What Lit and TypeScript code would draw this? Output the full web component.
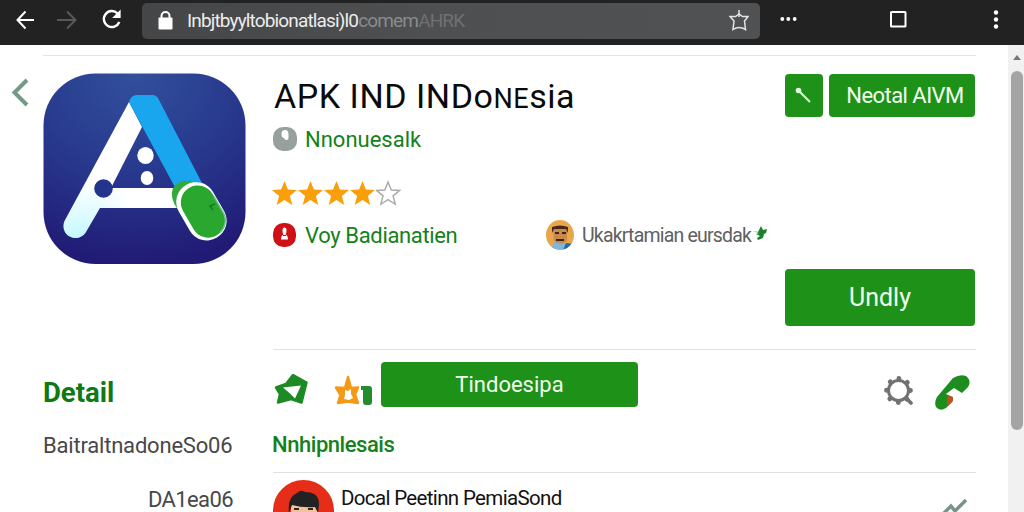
import { LitElement, html, css, svg } from 'lit';
import { customElement, property } from 'lit/decorators.js';

const STAR = 'M13 1l3.3 8.2 8.7.5-6.8 5.6 2.3 8.7-7.5-4.8L5.500 24l2.300-8.700L1 9.700l8.700-.5z';

@customElement('browser-bar')
export class BrowserBar extends LitElement {
  static styles = css`
    :host {
      display: flex;
      align-items: center;
      box-sizing: border-box;
      height: 45px;
      padding: 0 20px 5px 14px;
      background: #222223;
      color: #fff;
    }

    svg {
      display: block;
      flex: none;
    }

    .nav {
      display: flex;
      gap: 20px;
      width: 128px;
    }

    .address {
      display: flex;
      align-items: center;
      box-sizing: border-box;
      width: 618px;
      height: 36px;
      margin-top: 1px;
      padding: 0 11px 0 15px;
      border-radius: 5px;
      background: linear-gradient(90deg, #454648, #4e4f50 45%, #505152);
    }

    .url {
      flex: 1;
      margin-left: 13px;
      font-size: 19px;
      line-height: 34px;
      letter-spacing: -0.85px;
      white-space: nowrap;
    }

    .host {
      color: #ececec;
    }

    .path {
      color: #8a8b8c;
    }

    .tail {
      color: #707173;
    }

    .dots {
      margin-left: 20px;
    }

    .window {
      margin-left: 91px;
    }

    .menu {
      margin-left: auto;
    }
  `;

  render() {
    return html`
      <div class="nav">
        <svg width="22" height="22" viewBox="0 0 22 22" fill="none" stroke="#fff" stroke-width="2">
          <path d="M20 11H4M11.500 2.500L3.500 11l8 8.500" />
        </svg>
        <svg width="22" height="22" viewBox="0 0 22 22" fill="none" stroke="#58595a" stroke-width="2">
          <path d="M1 11h18M11 2.500l8.500 8.500-8.500 8.500" />
        </svg>
        <svg width="24" height="22" viewBox="-1 1 24 22" fill="none" stroke="#fff" stroke-width="2.400">
          <path d="M20.300 14A8 8 0 1 1 18.500 5.300" />
          <path d="M21.600 1.500v8.500h-8.500z" fill="#fff" stroke="none" />
        </svg>
      </div>
      <div class="address">
        <svg width="17" height="20" viewBox="0 1 17 20">
          <rect x="1.500" y="7.500" width="14" height="12" rx="1" fill="#fff" />
          <path d="M4.500 8V6a4 4 0 0 1 8 0V8" fill="none" stroke="#fff" stroke-width="2" />
        </svg>
        <div class="url"><span class="host">Inbjtbyyltobionatlasi)l0</span><span class="path">comem</span><span class="tail">AHRK</span></div>
        <svg width="20" height="22" viewBox="0 1 20 22" fill="none" stroke="#e4e4e4" stroke-width="1.500">
          <path d="M1 7.500h5.500L10 5l3.500 2.500H19l-3.500 4.500 1 8.500Q10 16.500 4 20.500L5 12z" />
          <path d="M10 1v7" />
        </svg>
      </div>
      <svg class="dots" width="18" height="6" viewBox="0 1 18 6" fill="#fff">
        <circle cx="2.300" cy="3" r="1.900" /><circle cx="8.300" cy="3" r="1.900" /><circle cx="14.700" cy="3" r="1.900" />
      </svg>
      <svg class="window" width="18" height="18" viewBox="-.5 .5 18 18">
        <rect x="1.500" y="1.500" width="14.500" height="14.500" rx=".5" fill="none" stroke="#fff" stroke-width="2" />
      </svg>
      <svg class="menu" width="16" height="20" viewBox="0 .5 16 20" fill="#fff">
        <circle cx="8" cy="3" r="2.200" /><circle cx="8" cy="10" r="2.200" /><circle cx="8" cy="17" r="2.200" />
      </svg>
    `;
  }
}

@customElement('app-logo')
export class AppLogo extends LitElement {
  static styles = css`
    :host,
    svg {
      display: block;
    }
  `;

  render() {
    return html`
      <svg width="203" height="192" viewBox="0 0 203 192">
        <defs>
          <radialGradient id="bg" cx=".45" cy="0" r="1">
            <stop offset="0" stop-color="#32509c" />
            <stop offset=".5" stop-color="#283a8e" />
            <stop offset="1" stop-color="#211b76" />
          </radialGradient>
          <linearGradient id="leg" x1="0" y1="0" x2="0" y2="1">
            <stop offset=".6" stop-color="#fff" />
            <stop offset="1" stop-color="#c4f8ff" />
          </linearGradient>
          <linearGradient id="bar" x1="0" y1="0" x2="1" y2="0">
            <stop offset="0" stop-color="#fff" stop-opacity="0" />
            <stop offset=".4" stop-color="#fff" />
          </linearGradient>
        </defs>
        <rect x=".5" y=".5" width="202" height="190.500" rx="52" fill="url(#bg)" />
        <path d="M86 29L22 147a12 12 0 0 0 21 12L57 135H136V115H68L99 54z" fill="url(#leg)" />
        <path d="M57 135H136V115H68z" fill="url(#bar)" />
        <path d="M86 29Q88 22 94 22H109Q114 22 116 27L161 114 134 118z" fill="#19a6ee" />
        <circle cx="60.500" cy="115.500" r="9.300" fill="#22348c" />
        <ellipse cx="102.500" cy="82.500" rx="8.200" ry="8.600" fill="#fff" />
        <ellipse cx="104" cy="105" rx="6.300" ry="7" fill="#fff" />
        <path d="M135 137Q126 124 130 115 138 105 151 109z" fill="#35a83e" />
        <g transform="rotate(-30 158 138)">
          <rect x="138.500" y="108" width="39.500" height="61" rx="19.500" fill="#fff" />
          <rect x="142.500" y="112" width="34" height="55" rx="17" fill="#2aa72e" />
          <path d="M176.500 132v17a16 16 0 0 1-13 17" fill="none" stroke="#6fc58c" stroke-width="1.500" />
        </g>
        <path d="M172 131l-5 2 3 4" fill="none" stroke="#167b22" stroke-width="1.500" />
      </svg>
    `;
  }
}

@customElement('star-rating')
export class StarRating extends LitElement {
  @property({ type: Number }) value = 0;

  static styles = css`
    :host {
      display: flex;
    }
  `;

  render() {
    return [0, 1, 2, 3, 4].map(
      (i) => html`
        <svg width="26" height="26" viewBox="1 0 25 25">
          ${i < this.value
            ? svg`<path d=${STAR} fill="#fa9f0c" />`
            : svg`<path d=${STAR} fill="#fff" stroke="#aaa" stroke-width="1.500" transform="translate(.5 1) scale(.93)" />`}
        </svg>
      `
    );
  }
}

@customElement('app-root')
export class AppRoot extends LitElement {
  static styles = css`
    :host {
      display: block;
      height: 512px;
      overflow: hidden;
      background: #fff;
      color: #111;
      font-family: Roboto, 'Liberation Sans', sans-serif;
    }

    svg {
      display: block;
      flex: none;
    }

    .page {
      display: flex;
      height: 467px;
    }

    .content {
      width: 1008px;
      padding-top: 10px;
      box-sizing: border-box;
    }

    .rule {
      height: 1px;
      background: #dfe1e3;
    }

    .top-rule {
      margin: 0 32px 0 43px;
      background: #e4e4e4;
    }

    .columns {
      display: grid;
      grid-template-columns: 43px 230px 703px;
    }

    .back {
      padding: 22px 0 0 10px;
    }

    .logo {
      height: 309px;
      padding-top: 17px;
      box-sizing: border-box;
    }

    .side {
      display: flex;
      flex-direction: column;
      width: 190px;
      white-space: nowrap;
    }

    .side-title {
      height: 54px;
      color: #0f7a12;
      font-size: 27.5px;
      font-weight: 700;
      line-height: 55px;
    }

    .side-text {
      height: 54px;
      color: #484848;
      font-size: 22px;
      line-height: 53px;
      letter-spacing: -0.2px;
    }

    .side-last {
      align-self: flex-end;
      letter-spacing: -0.6px;
    }

    .header {
      display: flex;
      justify-content: space-between;
      height: 293px;
    }

    .info {
      padding-top: 19px;
      white-space: nowrap;
    }

    h1 {
      height: 42px;
      margin: 0 0 0 1px;
      color: #0a0a0a;
      font-size: 34px;
      font-weight: 400;
      line-height: 42px;
      letter-spacing: 0.55px;
    }

    .small-caps {
      font-size: 27px;
    }

    .row {
      display: flex;
      align-items: center;
    }

    .developer {
      height: 44px;
    }

    .green {
      color: #14811a;
      font-size: 22px;
    }

    .developer .green,
    .author .green {
      margin-left: 8px;
    }

    .author .green {
      letter-spacing: -0.35px;
    }

    .rating {
      margin: 19px 0 14px -1px;
    }

    .author {
      height: 30px;
    }

    .author-name {
      width: 241px;
    }

    .reviewer-avatar {
      margin-left: 32px;
    }

    .reviewer {
      margin: 0 2px 0 8px;
      color: #606060;
      font-size: 19.5px;
      letter-spacing: -0.8px;
    }

    .actions {
      display: flex;
      flex-direction: column;
      align-items: flex-end;
      padding: 18px 1px 0 0;
    }

    .button {
      display: flex;
      align-items: center;
      justify-content: center;
      box-sizing: border-box;
      border-radius: 4px;
      background: #1e9118;
      color: #f1fff0;
      white-space: nowrap;
    }

    .pair {
      display: flex;
      gap: 6px;
      margin-bottom: 151.5px;
    }

    .edit {
      width: 38px;
      height: 43px;
    }

    .install {
      width: 146px;
      height: 43px;
      padding-left: 6px;
      font-size: 22px;
      letter-spacing: -0.55px;
    }

    .open {
      width: 190px;
      height: 57px;
      font-size: 25px;
    }

    .tools {
      height: 68px;
    }

    .share {
      width: 60px;
      margin-top: 8px;
    }

    .favorite {
      width: 48px;
      margin-top: 8px;
    }

    .wide {
      width: 257px;
      height: 45px;
      margin-top: 1px;
      font-size: 22px;
    }

    .gear {
      margin: 13px 20px 0 auto;
    }

    .phone {
      margin: 17px 5px 0 0;
    }

    .category {
      height: 54px;
      margin-left: -1px;
      font-weight: 500;
      line-height: 54px;
      letter-spacing: -0.45px;
    }

    .comment {
      display: flex;
      align-items: flex-start;
      height: 39px;
      overflow: hidden;
      white-space: nowrap;
    }

    .comment-avatar {
      margin-top: 7px;
    }

    .comment-name {
      flex: 1;
      margin-left: 7px;
      font-size: 20.5px;
      line-height: 50px;
      letter-spacing: -0.65px;
    }

    .trend {
      margin: 25px 8px 0 0;
    }

    .scrollbar {
      width: 16px;
      padding: 9px 2px 0 3px;
      box-sizing: border-box;
      background: #f1f1f1;
    }

    .thumb {
      width: 12px;
      height: 359px;
      margin-top: 11px;
      border-radius: 6px;
      background: #a4a4a4;
    }
  `;

  renderInfo() {
    return html`
      <div class="info">
        <h1>APK IND INDo<span class="small-caps">NE</span>sia</h1>
        <div class="row developer">
          <svg width="24" height="26" viewBox="0 0 24 26">
            <rect y="1" width="24" height="24" rx="10" fill="#98a09e" />
            <path d="M8.500 8q0-4 3.500-4t3.500 4v4q0 2-2 2t-2.500-2q-2.500 0-2.500-4z" fill="#fff" />
          </svg>
          <span class="green">Nnonuesalk</span>
        </div>
        <star-rating class="rating" value="4"></star-rating>
        <div class="row author">
          <div class="row author-name">
            <svg width="24" height="26" viewBox="0 0 24 26">
              <rect y="1" width="23" height="24" rx="10.500" fill="#cf1016" />
              <path d="M11.500 5.500q2 0 2 3t-1 4q2.500 1 2.500 5H8q0-4 2.500-5-1-1-1-4t2-3z" fill="#fff" />
              <path d="M10 13.500h3" stroke="#cf1016" />
            </svg>
            <span class="green">Voy Badianatien</span>
          </div>
          <svg class="reviewer-avatar" width="28" height="30" viewBox="0 0 28 30">
            <clipPath id="face"><ellipse cx="14" cy="15" rx="14" ry="15" /></clipPath>
            <g clip-path="url(#face)">
              <path d="M0 0h28v30H0z" fill="#e9a74c" />
              <path d="M7 9h14v11q-2 4-7 4t-6-4z" fill="#c88a4c" />
              <path d="M6 13V7q8-3 16 0v6l-2-4H8z" fill="#49281b" />
              <path d="M9 13h4M16 13h4M10 20h8" stroke="#3b231b" stroke-width="2" />
              <path d="M5 30l3-8 8 2 5-1 7 1v6z" fill="#7db7da" />
              <path d="M17 30l3-7 8 1v6z" fill="#2868a4" />
            </g>
          </svg>
          <span class="reviewer">Ukakrtamian eursdak</span>
          <svg width="14" height="18" viewBox="0 1 14 18" fill="#19832a">
            <path d="M0 6l5 1 3-6 2 4 4-1-1 4-2 1-1 4-5 2-1-2 3-2-4-2 3-1z" />
          </svg>
        </div>
      </div>
    `;
  }

  renderTools() {
    return html`
      <div class="row tools">
        <div class="share">
          <svg width="36" height="36" viewBox="0 0 36 36">
            <path d="M20 5L33.500 12.500 28.500 32.500 18 29 5 32.500 7 24 3 17.500 13 14z" fill="#1d8a23" stroke="#1d8a23" stroke-width="2.500" stroke-linejoin="round" />
            <path d="M10 17.500l18-2-6 13-5-5z" fill="#fff" />
          </svg>
        </div>
        <div class="favorite">
          <svg width="40" height="36" viewBox="0 0 40 36">
            <path d="M15 7l3 11 7-.5-3 7 3 8.500-10-1.500L5 33l2.500-8L3 17.500l9 .5z" fill="#f39a16" stroke="#f39a16" stroke-width="2.500" stroke-linejoin="round" />
            <path d="M12 20l3 1 3-2v5l2 4-4 2-5-1 1-4z" fill="#fff" />
            <path d="M28 16h8q3 0 3 3v13q0 3-3 3h-3q-3 0-3-3V20h-2z" fill="#238c2c" />
          </svg>
        </div>
        <div class="button wide">Tindoesipa</div>
        <svg class="gear" width="32" height="32" viewBox="0 0 32 32" fill="none" stroke="#707273">
          <circle cx="15.500" cy="15.500" r="10" stroke-width="3" />
          <circle cx="15.500" cy="15.500" r="12" stroke-width="4.800" stroke-linecap="round" stroke-dasharray=".1 9.325" />
          <path d="M23 23l5 5" stroke-width="3.800" stroke-linecap="round" />
        </svg>
        <svg class="phone" width="36" height="36" viewBox="0 0 36 36">
          <path d="M18 3Q25-1 31 1q6 5 2 11l-6 6-8-5-8 6 6 3v5l-6 6Q5 37 1 32-1 27 2 22z" fill="#1d8d20" />
          <path d="M13 20l5 2v4l-5 5q-2-3 0-11z" fill="#b8551d" />
        </svg>
      </div>
    `;
  }

  renderComment() {
    return html`
      <div class="comment">
        <svg class="comment-avatar" width="61" height="61" viewBox="0 0 61 61">
          <circle cx="30.500" cy="30.500" r="30.500" fill="#e52d18" />
          <path d="M18 24h27v18H18z" fill="#f2c29b" />
          <path d="M16 33q-2-16 8-20 3-3 6-2l2 1q14 0 14 12l-1 9-3-6q-12 1-23-2z" fill="#222" />
          <path d="M21 29h5M35 29h5" stroke="#33241f" stroke-width="2" />
        </svg>
        <span class="comment-name">Docal Peetinn PemiaSond</span>
        <svg class="trend" width="26" height="20" viewBox="0 0 26 20" fill="none" stroke="#789489" stroke-width="3.500">
          <path d="M1 16l8-8 4 5L24 2" />
        </svg>
      </div>
    `;
  }

  render() {
    return html`
      <browser-bar></browser-bar>
      <div class="page">
        <div class="content">
          <div class="rule top-rule"></div>
          <div class="columns">
            <div class="back">
              <svg width="20" height="30" viewBox="0 0 20 30" fill="none" stroke="#759987" stroke-width="4">
                <path d="M17 2L4.500 14.500 17 27" />
              </svg>
            </div>
            <div>
              <div class="logo"><app-logo></app-logo></div>
              <div class="side">
                <span class="side-title">Detail</span>
                <span class="side-text">BaitraltnadoneSo06</span>
                <span class="side-text side-last">DA1ea06</span>
              </div>
            </div>
            <div>
              <div class="header">
                ${this.renderInfo()}
                <div class="actions">
                  <div class="pair">
                    <div class="button edit">
                      <svg width="20" height="20" viewBox="0 0 20 20">
                        <path d="M4 4l12 12" stroke="#d6f5cf" stroke-width="2.200" />
                        <circle cx="4.500" cy="4.500" r="2.800" fill="#e6ffe0" />
                      </svg>
                    </div>
                    <div class="button install">Neotal AIVM</div>
                  </div>
                  <div class="button open">Undly</div>
                </div>
              </div>
              <div class="rule"></div>
              ${this.renderTools()}
              <div class="green category">Nnhipnlesais</div>
              <div class="rule"></div>
              ${this.renderComment()}
            </div>
          </div>
        </div>
        <div class="scrollbar">
          <svg width="12" height="6" viewBox="0 0 12 6"><path d="M2 6l4-5 4 5z" fill="#777" /></svg>
          <div class="thumb"></div>
        </div>
      </div>
    `;
  }
}

declare global {
  interface HTMLElementTagNameMap {
    'app-root': AppRoot;
    'app-logo': AppLogo;
    'browser-bar': BrowserBar;
    'star-rating': StarRating;
  }
}
